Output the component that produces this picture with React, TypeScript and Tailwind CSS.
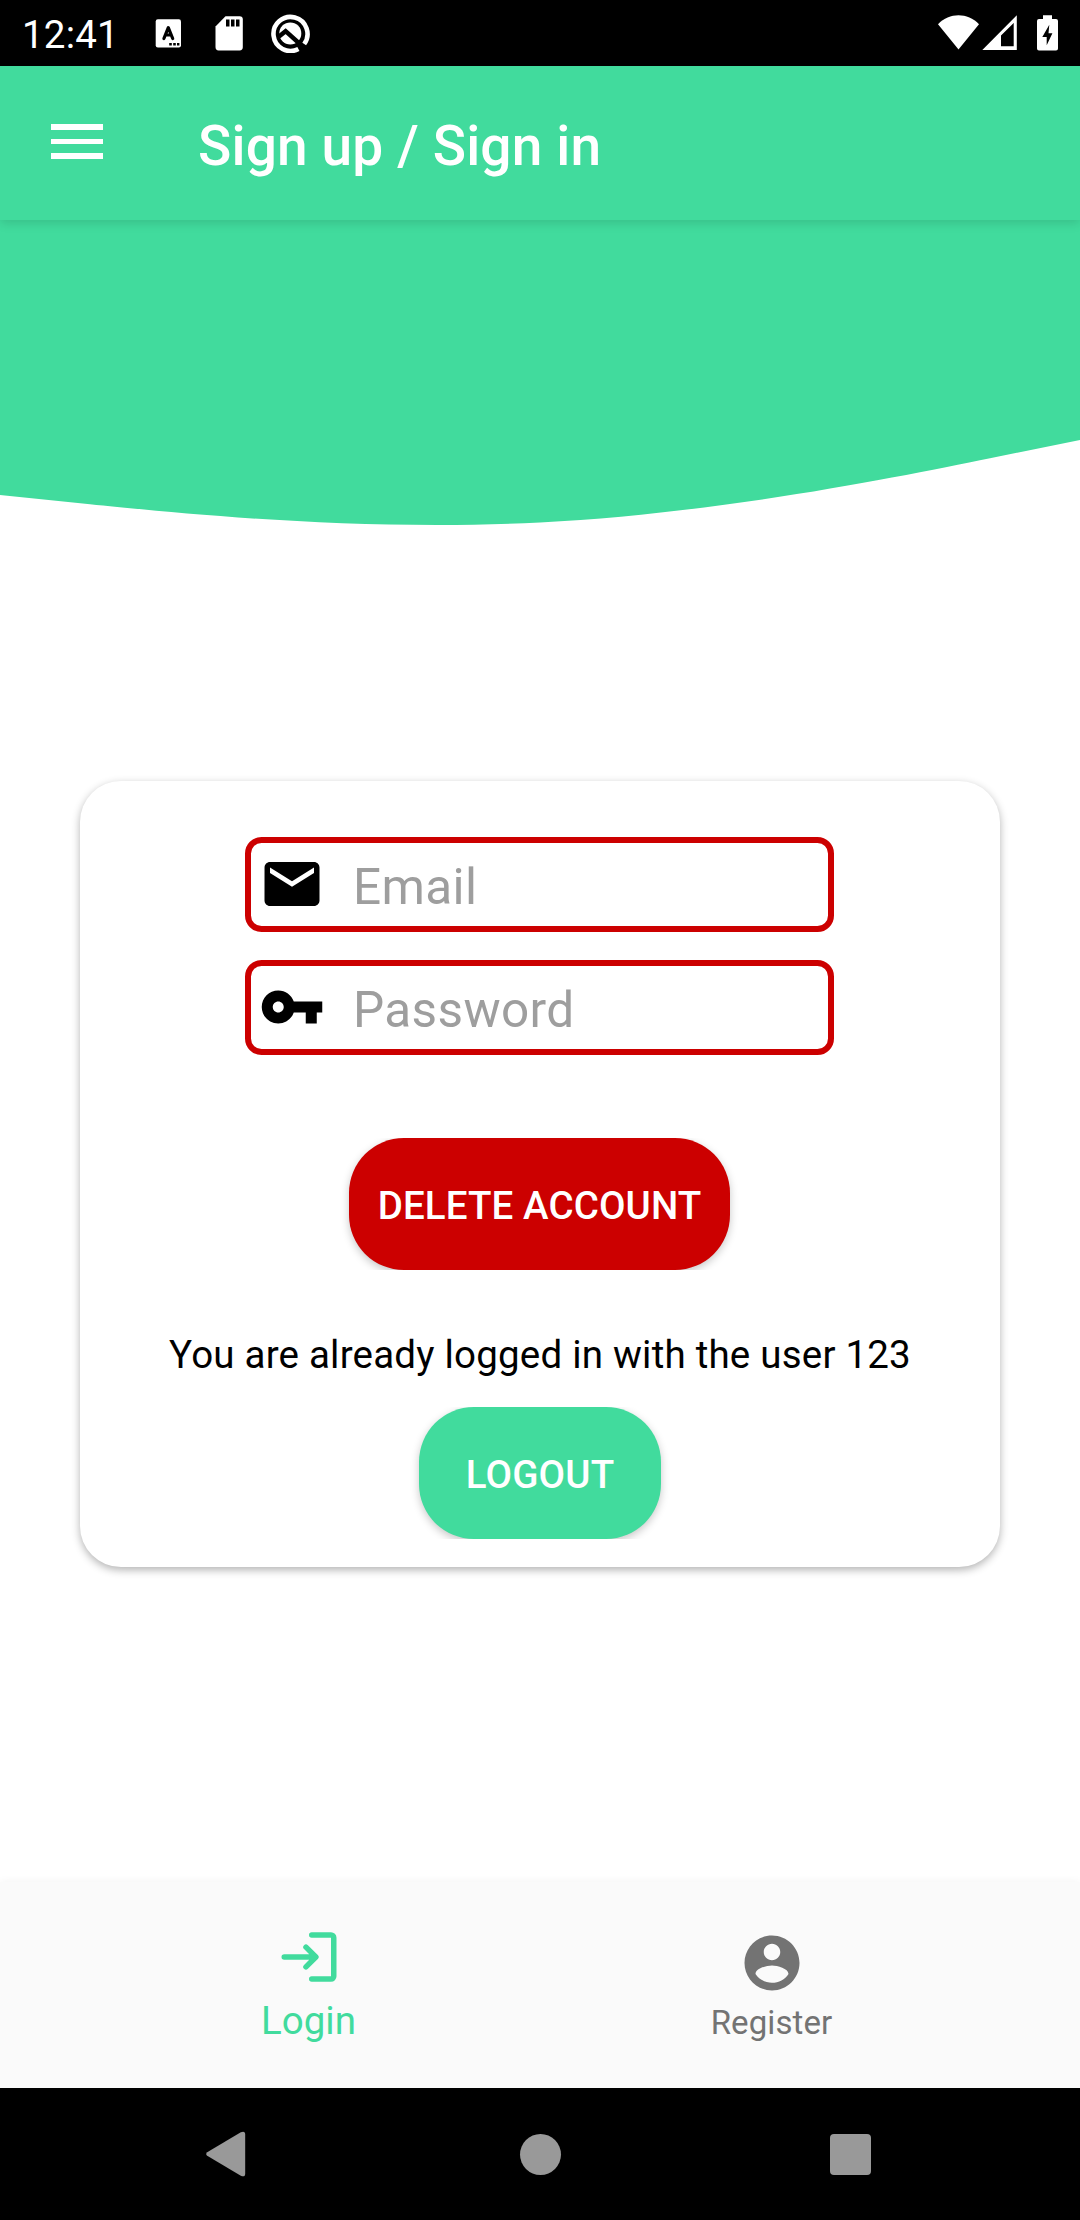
import React from "react";

function StatusBar() {
  return (
    <div className="flex h-[66px] shrink-0 items-start bg-black text-white">
      <span className="ml-[22px] mt-[11px] w-[96px] text-[38.5px] leading-[48px] tracking-[0.2px] whitespace-nowrap">12:41</span>
      {/* keyboard */}
      <svg className="ml-[37px] mt-[19px]" width="27" height="29" viewBox="0 0 27 29">
        <rect x="0.7" y="0.3" width="25.3" height="28.2" rx="2.2" fill="#fff" />
        <path d="M8.9 19.5 L13.3 8.7 L17.7 19.5 M10.6 16h5.6" fill="none" stroke="#000" strokeWidth="3.2" strokeLinecap="round" strokeLinejoin="round" />
        <path d="M14.2 24h2.6v2.4h-2.6zM18.2 24h2.6v2.4h-2.6zM22 24h2.4v2.4H22z" fill="#000" />
      </svg>
      {/* sd card */}
      <svg className="ml-[33px] mt-[16px]" width="28" height="35" viewBox="0 0 28 35">
        <path d="M10.5 .3H24.6Q27.8 .3 27.8 3.4V31Q27.8 34.4 24.6 34.4H3.6Q.5 34.4 .5 31V10.4Z" fill="#fff" />
        <path d="M11 3.5h3.5v7H11zM16 3.5h3.5v7H16zM21 3.5h3.5v7H21z" fill="#000" />
      </svg>
      {/* circular app mark */}
      <svg className="ml-[28px] mt-[14px]" width="39" height="39" viewBox="0 0 39 39">
        <path d="M27.4 35 A17 17 0 1 1 33.2 30" fill="none" stroke="#fff" strokeWidth="4.6" />
        <circle cx="19.3" cy="19.4" r="11" fill="#fff" />
        <path d="M8 22.5 L14.6 17.2 L29.5 30.5" fill="none" stroke="#000" strokeWidth="4.4" />
      </svg>
      <div className="flex-1" />
      <svg className="mt-[15px]" width="42" height="35" viewBox="0 0 42 35">
        <path d="M0 9.3 C11.5-2.6 29.5-2.6 41 9.3L20.5 34.6Z" fill="#fff" />
      </svg>
      <svg className="ml-[2px] mt-[15px]" width="35" height="36" viewBox="0 0 35 36">
        <path fillRule="evenodd" d="M0.3 35L34.8.3V35ZM19 20.5V31.2H31.7V8Z" fill="#fff" />
      </svg>
      <svg className="ml-[20px] mr-[22px] mt-[15px]" width="21" height="36" viewBox="0 0 21 36">
        <path d="M6 .3h9v3.7h4q2 0 2 2v27.5q0 2-2 2H2q-2 0-2-2V6q0-2 2-2h4z" fill="#fff" />
        <path d="M12.3 9.7L5.3 22h4.4v8.2L15.4 18.3h-3.9z" fill="#000" />
      </svg>
    </div>
  );
}

function AppBar() {
  return (
    <header className="relative z-10 flex h-[154px] shrink-0 items-start bg-[#41db9d] shadow-[0_3px_10px_rgba(0,0,0,0.13)]">
      <button aria-label="Menu" className="ml-[51px] mt-[58px] flex w-[52px] flex-col gap-[9px]">
        <span className="h-[5.6px] w-full bg-white" />
        <span className="h-[5.6px] w-full bg-white" />
        <span className="h-[5.6px] w-full bg-white" />
      </button>
      <h1 className="ml-[95px] mt-[48px] text-[55px] font-medium leading-[64px] tracking-[0.16px] text-white">Sign up / Sign in</h1>
    </header>
  );
}

function Field({ label, type, children }: { label: string; type: string; children: React.ReactNode }) {
  return (
    <label className="mr-px flex h-[95px] w-[589px] items-center rounded-[16.5px] border-6 border-[#cc0000] pl-[8px]">
      <svg className="-mt-[1.5px] shrink-0" width="66" height="66" viewBox="0 0 24 24" fill="#000">
        {children}
      </svg>
      <input
        type={type}
        placeholder={label}
        className="ml-[28px] h-[66px] min-w-0 flex-1 bg-transparent pt-[5px] text-[49.5px] tracking-[0.35px] outline-none placeholder:text-[#9e9e9e] placeholder:opacity-100"
      />
    </label>
  );
}

function LoginCard() {
  return (
    <main className="mx-auto mt-[231px] flex h-[786px] w-[920px] flex-col items-center rounded-[41px] bg-white pt-[56px] shadow-[0_3px_8px_rgba(0,0,0,0.3)]">
      <Field label="Email" type="email">
        <path d="M20 4H4c-1.1 0-1.99.9-1.99 2L2 18c0 1.1.9 2 2 2h16c1.1 0 2-.9 2-2V6c0-1.1-.9-2-2-2zm0 4l-8 5-8-5V6l8 5 8-5v2z" />
      </Field>
      <div className="h-[28px]" />
      <Field label="Password" type="password">
        <path d="M12.65 10C11.83 7.67 9.61 6 7 6c-3.31 0-6 2.69-6 6s2.69 6 6 6c2.61 0 4.83-1.67 5.65-4H17v4h4v-4h2v-4H12.65zM7 14c-1.1 0-2-.9-2-2s.9-2 2-2 2 .9 2 2-.9 2-2 2z" />
      </Field>
      <div className="mr-px mt-[83px] h-[132px] overflow-hidden px-4">
        <button className="h-[132px] w-[381px] rounded-[55px] bg-[#cc0000] pt-[4px] text-[38.5px] font-medium tracking-[0.12px] text-white shadow-[0_3px_8px_rgba(0,0,0,0.22)]">
          DELETE ACCOUNT
        </button>
      </div>
      <p className="mt-[59px] h-[52px] text-[38.5px] leading-[52px] tracking-[0.21px] whitespace-nowrap text-black">
        You are already logged in with the user 123
      </p>
      <div className="mt-[26px] h-[132px] overflow-hidden px-4">
        <button className="h-[132px] w-[242px] rounded-[55px] bg-[#41db9d] pt-[4px] text-[38.5px] font-medium tracking-[0.2px] text-white shadow-[0_3px_8px_rgba(0,0,0,0.22)]">
          LOGOUT
        </button>
      </div>
    </main>
  );
}

function BottomTabs() {
  return (
    <nav className="flex h-[206px] shrink-0 justify-center bg-[#fafafa] shadow-[0_0_8px_rgba(0,0,0,0.06)]">
      <button className="flex w-[463px] flex-col items-center pt-[42px] text-[#41db9d]">
        <svg width="66" height="66" viewBox="0 0 24 24" fill="none" stroke="currentColor" strokeWidth="2" strokeLinecap="round" strokeLinejoin="round">
          <path d="M13 4h7a1 1 0 0 1 1 1v14a1 1 0 0 1-1 1h-7M3 12h11M10.9 8.4l3.6 3.6-3.6 3.6" />
        </svg>
        <span className="mt-[7px] text-[38.5px] leading-[48px]">Login</span>
      </button>
      <button className="flex w-[463px] flex-col items-center pt-[48px] text-[#737373]">
        <svg width="66" height="66" viewBox="0 0 24 24" fill="currentColor">
          <path d="M12 2C6.48 2 2 6.48 2 12s4.48 10 10 10 10-4.48 10-10S17.52 2 12 2zm0 3c1.66 0 3 1.34 3 3s-1.34 3-3 3-3-1.34-3-3 1.34-3 3-3zm0 14.2c-2.5 0-4.71-1.28-6-3.22.03-1.99 4-3.08 6-3.08 1.99 0 5.97 1.09 6 3.08-1.29 1.94-3.5 3.22-6 3.22z" />
        </svg>
        <span className="mt-[7px] text-[33px] leading-[40px] tracking-[0.1px]">Register</span>
      </button>
    </nav>
  );
}

function SystemNav() {
  return (
    <div className="flex h-[132px] shrink-0 items-center bg-black pl-[206px]">
      <svg width="40" height="46" viewBox="0 0 40 46" fill="#999">
        <path d="M1.2 21.2L34.8 1.2Q39.2-.6 39.2 3.5V42.5Q39.2 46.6 34.8 44.8L1.2 24.8Q-.8 23 1.2 21.2Z" />
      </svg>
      <div className="ml-[273.5px] size-[41px] rounded-full bg-[#999]" />
      <div className="ml-[269.5px] mt-px size-[41px] rounded-[4px] bg-[#999]" />
    </div>
  );
}

export default function App() {
  return (
    <div className="flex h-[2220px] w-[1080px] flex-col overflow-hidden bg-white font-['Roboto',sans-serif]">
      <StatusBar />
      <AppBar />
      <div className="h-[55px] shrink-0 bg-[#41db9d]" />
      <svg className="-mt-px h-[276px] w-full shrink-0" viewBox="0 -1.16 1440 321.16" preserveAspectRatio="none" fill="#41db9d">
        <path d="M0,256L120,266.7C240,277.3,480,298.7,720,288C960,277.3,1200,234.7,1320,213.3L1440,192V-1.16H0Z" />
      </svg>
      <div className="flex-1">
        <LoginCard />
      </div>
      <BottomTabs />
      <SystemNav />
    </div>
  );
}
